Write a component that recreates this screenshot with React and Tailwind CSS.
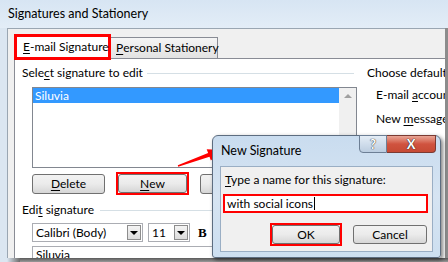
import React from "react";

const F = { fontFamily: 'Lato, "Noto Sans", sans-serif' };

function U({ children }) {
  return <span className="underline underline-offset-[2px]">{children}</span>;
}

function WinButton({ children, className = "" }) {
  return (
    <div
      className={
        "flex shrink-0 items-center justify-center whitespace-nowrap rounded-[3px] border border-[#707070] bg-gradient-to-b from-[#f2f2f2] via-[#ebebeb] to-[#d6d6d6] text-[12px] leading-none text-black " +
        className
      }
    >
      {children}
    </div>
  );
}

function Combo({ text, w }) {
  return (
    <div className={"flex h-[19px] shrink-0 items-stretch border border-[#abadb3] bg-white " + w}>
      <div className="flex flex-1 items-center whitespace-nowrap pl-[3px] text-[12px] leading-none text-black">{text}</div>
      <div className="m-[1px] flex w-[14px] items-center justify-center border border-[#8d8d8d] bg-gradient-to-b from-[#f4f4f4] to-[#dcdcdc]">
        <div className="h-0 w-0 border-x-[4px] border-t-[4px] border-x-transparent border-t-black" />
      </div>
    </div>
  );
}

export default function App() {
  return (
    <div
      className="relative h-[262px] w-[448px] overflow-hidden bg-[#dde8f3] text-black"
      style={F}
    >
      {/* title bar */}
      <div className="flex h-[28px] items-center whitespace-nowrap bg-gradient-to-b from-[#d7e5f3] to-[#e3edf7] pl-[8px] text-[12.5px] leading-none">
        Signatures and Stationery
      </div>

      {/* body */}
      <div className="flex h-[230px]">
        <div className="w-[7px] shrink-0 bg-[#dbe6f1]" />
        <div className="flex min-w-0 flex-1 flex-col border-l border-t border-[#9aa6b2] bg-[#f0f0f0] pl-[6px] pt-[5px]">
          {/* tabs */}
          <div className="relative z-10 -mb-[2px] flex items-end whitespace-nowrap">
            <div className="flex h-[26px] w-[97px] shrink-0 items-center border-[3px] border-[#ff0000] bg-white pl-[6px] text-[12px] leading-none">
              <U>E</U>-mail Signature
            </div>
            <div className="mb-[2px] flex h-[21px] w-[107px] shrink-0 items-center border-r border-t border-[#898c95] bg-gradient-to-b from-[#f5f5f5] to-[#e2e2e2] pl-[5px] text-[12px] leading-none">
              <U>P</U>ersonal Stationery
            </div>
          </div>

          {/* panel */}
          <div className="flex min-w-0 flex-1 border-l border-t border-[#898c95] bg-white">
            {/* left column */}
            <div className="flex w-[346px] shrink-0 flex-col">
              <div className="mt-[7px] flex items-center whitespace-nowrap pl-[7px]">
                <span className="text-[12px] leading-[14px]">
                  Sele<U>c</U>t signature to edit
                </span>
                <div className="ml-[4px] mr-[7px] h-px flex-1 bg-[#d5dfe5]" />
              </div>
              {/* listbox */}
              <div className="ml-[17px] mt-[7px] flex h-[81px] w-[325px] border border-[#828790] bg-white">
                <div className="flex-1">
                  <div className="flex h-[15px] items-center bg-[#3399ff] pl-[2px] text-[12px] leading-none text-white">
                    Siluvia
                  </div>
                </div>
                <div className="flex w-[17px] flex-col items-center bg-[#f0f0f0]">
                  <div className="mt-[6px] h-0 w-0 border-x-[4px] border-b-[4px] border-x-transparent border-b-[#a0a0a0]" />
                </div>
              </div>
              {/* buttons */}
              <div className="ml-[17px] mt-[4px] flex items-center">
                <WinButton className="h-[20px] w-[73px]">
                  <U>D</U>elete
                </WinButton>
                <div className="ml-[11px] flex h-[23px] w-[73px] shrink-0 items-center justify-center border-[2px] border-[#ff0000]">
                  <WinButton className="h-[19px] w-[69px]">
                    <U>N</U>ew
                  </WinButton>
                </div>
                <WinButton className="ml-[11px] h-[20px] w-[73px]"> </WinButton>
              </div>
              {/* edit signature */}
              <div className="mt-[8px] flex items-center whitespace-nowrap pl-[7px]">
                <span className="text-[12px] leading-[14px]">
                  Edi<U>t</U> signature
                </span>
                <div className="ml-[6px] h-px flex-1 bg-[#d5dfe5]" />
              </div>
              <div className="ml-[17px] mt-[6px] flex items-center">
                <Combo text="Calibri (Body)" w="w-[111px]" />
                <div className="ml-[5px]">
                  <Combo text="11" w="w-[42px]" />
                </div>
                <div
                  className="ml-[8px] text-[13px] font-bold leading-none"
                  style={{ fontFamily: '"Liberation Serif", serif' }}
                >
                  B
                </div>
              </div>
              <div className="ml-[17px] mt-[4px] h-[20px] w-[330px] border border-[#abadb3] bg-white pl-[3px] text-[12px] leading-[16px]">
                Siluvia
              </div>
            </div>
            {/* right column */}
            <div className="flex min-w-0 flex-1 flex-col overflow-hidden whitespace-nowrap pl-[6px] text-[12px] leading-[14px]">
              <div className="mt-[7px]">Choose default s</div>
              <div className="ml-[9px] mt-[8px]">
                E-mail <U>a</U>ccount
              </div>
              <div className="ml-[9px] mt-[10px]">
                New <U>m</U>essages
              </div>
            </div>
          </div>
        </div>
        <div className="w-[3px] shrink-0 bg-[#8c8c8c]" />
      </div>
      {/* bottom shadow */}
      <div className="flex h-[4px]">
        <div className="w-[7px] shrink-0 bg-[#dbe6f1]" />
        <div className="w-[13px] shrink-0 bg-gradient-to-r from-[#dbe6f1] to-[#6e6e6e]" />
        <div className="flex-1 bg-gradient-to-b from-[#5a5a5a] to-[#9a9a9a]" />
      </div>

      {/* arrow */}
      <svg
        className="pointer-events-none absolute left-0 top-0"
        width="448"
        height="262"
        viewBox="0 0 448 262"
      >
        <polygon
          points="177.8,165.3 208.1,152.9 206.7,149.2 222,150 210.9,160.4 209.5,156.7 178.2,166.7"
          fill="#ff0000"
        />
      </svg>

      {/* New Signature dialog */}
      <div className="absolute left-[212px] top-[135px] flex h-[123px] w-[229px] flex-col rounded-t-[6px] rounded-b-[3px] border border-[#5d6d80] bg-gradient-to-b from-[#c9dcef] via-[#d6e4f2] to-[#cddff0] shadow-[2px_2px_4px_rgba(0,0,0,0.5)]">
        <div className="flex h-[30px] items-center whitespace-nowrap pl-[8px] text-[12.5px] leading-none">
          New Signature
        </div>
        <div className="absolute right-[4px] top-[-1px] flex">
          <div className="flex h-[18px] w-[28px] items-center justify-center rounded-bl-[4px] border border-[#6d7f95] bg-gradient-to-b from-[#e4edf6] to-[#bccde0] text-[13px] font-bold leading-none text-white [text-shadow:0_0_1px_#333,0_0_1px_#333]">
            ?
          </div>
          <div className="flex h-[18px] w-[49px] items-center justify-center rounded-br-[4px] border border-l-0 border-[#7a3a32] bg-gradient-to-b from-[#e8a596] via-[#d0533f] to-[#c64a34] text-[13px] font-bold leading-none text-white [text-shadow:0_0_1px_#222,0_0_1px_#222]">
            X
          </div>
        </div>
        <div className="mx-[7px] mb-[5px] flex flex-1 flex-col border border-[#9aaec4] bg-[#f0f0f0] pl-[2px] pt-[6px]">
          <div className="whitespace-nowrap pl-[2px] text-[12px] leading-[14px]">
            <U>T</U>ype a name for this signature:
          </div>
          <div className="mt-[7px] flex h-[19px] w-[205px] items-center whitespace-nowrap border-[2px] border-[#ff0000] bg-white pl-[2px] text-[12px] leading-none">
            with social icons
            <span className="ml-px inline-block h-[13px] w-px bg-black" />
          </div>
          <div className="mt-[10px] flex items-center">
            <div className="ml-[47px] flex h-[23px] w-[72px] shrink-0 items-center justify-center border-[2px] border-[#ff0000]">
              <WinButton className="h-[19px] w-[68px]">OK</WinButton>
            </div>
            <WinButton className="ml-[11px] h-[19px] w-[74px]">Cancel</WinButton>
          </div>
        </div>
      </div>
    </div>
  );
}
